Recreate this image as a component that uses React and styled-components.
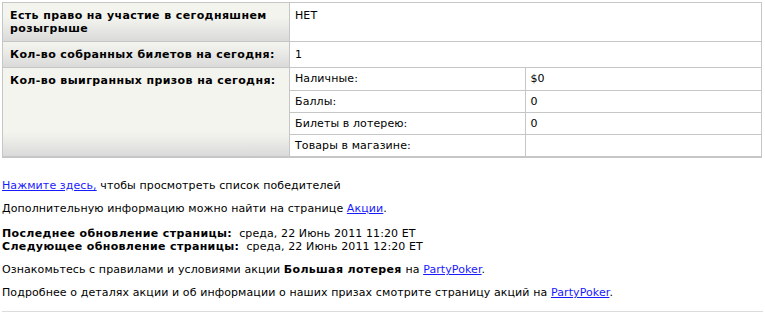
import React from "react";
import styled, { createGlobalStyle } from "styled-components";

const GlobalStyle = createGlobalStyle`
  body {
    margin: 0;
    background: #fff;
    font-family: "DejaVu Sans", Verdana, sans-serif;
    font-size: 11px;
    letter-spacing: 0.1px;
    color: #000;
  }
  b {
    letter-spacing: 0.35px;
  }
`;

const Page = styled.div`
  padding: 2px 2px 0 2px;
  width: 761px;
`;

const Table = styled.table`
  width: 760px;
  border-collapse: collapse;
  border: 1px solid #c6c6c6;
  border-bottom-width: 2px;
`;

const LabelCell = styled.th`
  width: 272px;
  padding: 6px 7px;
  text-align: left;
  vertical-align: top;
  font-weight: bold;
  letter-spacing: 0.4px;
  line-height: 13px;
  border: 1px solid #c6c6c6;
  background: #f4f4ef linear-gradient(to bottom, #f4f4ef, #dadada) bottom / 100% 24px no-repeat;
`;

const ValueCell = styled.td`
  padding: ${(p) => (p.$flush ? "0" : "6px 5px")};
  vertical-align: top;
  line-height: 13px;
  border: 1px solid #c6c6c6;
`;

const InnerTable = styled.table`
  width: 100%;
  border-collapse: collapse;
`;

const InnerCell = styled.td`
  height: 22px;
  padding: 0 5px;
  line-height: 13px;
  border-bottom: 1px solid #c6c6c6;
  border-left: ${(p) => (p.$divided ? "1px solid #c6c6c6" : "none")};
  width: ${(p) => (p.$divided ? "236px" : "auto")};
  box-sizing: border-box;

  tr:last-child > & {
    border-bottom: none;
  }
`;

const Notes = styled.div`
  padding-top: 21px;
  line-height: 13px;
`;

const Paragraph = styled.p`
  margin: 0 0 ${(p) => p.$gap || "10px"} 0;
`;

const Link = styled.a`
  color: #1a1aff;
  text-decoration: underline;
`;

const Rule = styled.div`
  margin-top: 12px;
  height: 1px;
  background: #dcdcdc;
  width: 761px;
`;

const prizes = [
  ["Наличные:", "$0"],
  ["Баллы:", "0"],
  ["Билеты в лотерею:", "0"],
  ["Товары в магазине:", ""],
];

export default function App() {
  return (
    <Page>
      <GlobalStyle />
      <Table>
        <tbody>
          <tr>
            <LabelCell>Есть право на участие в сегодняшнем розыгрыше</LabelCell>
            <ValueCell>НЕТ</ValueCell>
          </tr>
          <tr>
            <LabelCell>Кол-во собранных билетов на сегодня:</LabelCell>
            <ValueCell>1</ValueCell>
          </tr>
          <tr>
            <LabelCell>Кол-во выигранных призов на сегодня:</LabelCell>
            <ValueCell $flush>
              <InnerTable>
                <tbody>
                  {prizes.map(([name, amount]) => (
                    <tr key={name}>
                      <InnerCell>{name}</InnerCell>
                      <InnerCell $divided>{amount}</InnerCell>
                    </tr>
                  ))}
                </tbody>
              </InnerTable>
            </ValueCell>
          </tr>
        </tbody>
      </Table>

      <Notes>
        <Paragraph>
          <Link href="#">Нажмите здесь,</Link> чтобы просмотреть список победителей
        </Paragraph>
        <Paragraph $gap="12px">
          Дополнительную информацию можно найти на странице <Link href="#">Акции</Link>.
        </Paragraph>
        <Paragraph>
          <b>Последнее обновление страницы:</b>&nbsp;&nbsp;среда, 22 Июнь 2011 11:20 ET
          <br />
          <b>Следующее обновление страницы:</b>&nbsp;&nbsp;среда, 22 Июнь 2011 12:20 ET
        </Paragraph>
        <Paragraph>
          Ознакомьтесь с правилами и условиями акции <b>Большая лотерея</b> на{" "}
          <Link href="#">PartyPoker</Link>.
        </Paragraph>
        <Paragraph $gap="0">
          Подробнее о деталях акции и об информации о наших призах смотрите страницу акций на{" "}
          <Link href="#">PartyPoker</Link>.
        </Paragraph>
      </Notes>
      <Rule />
    </Page>
  );
}
